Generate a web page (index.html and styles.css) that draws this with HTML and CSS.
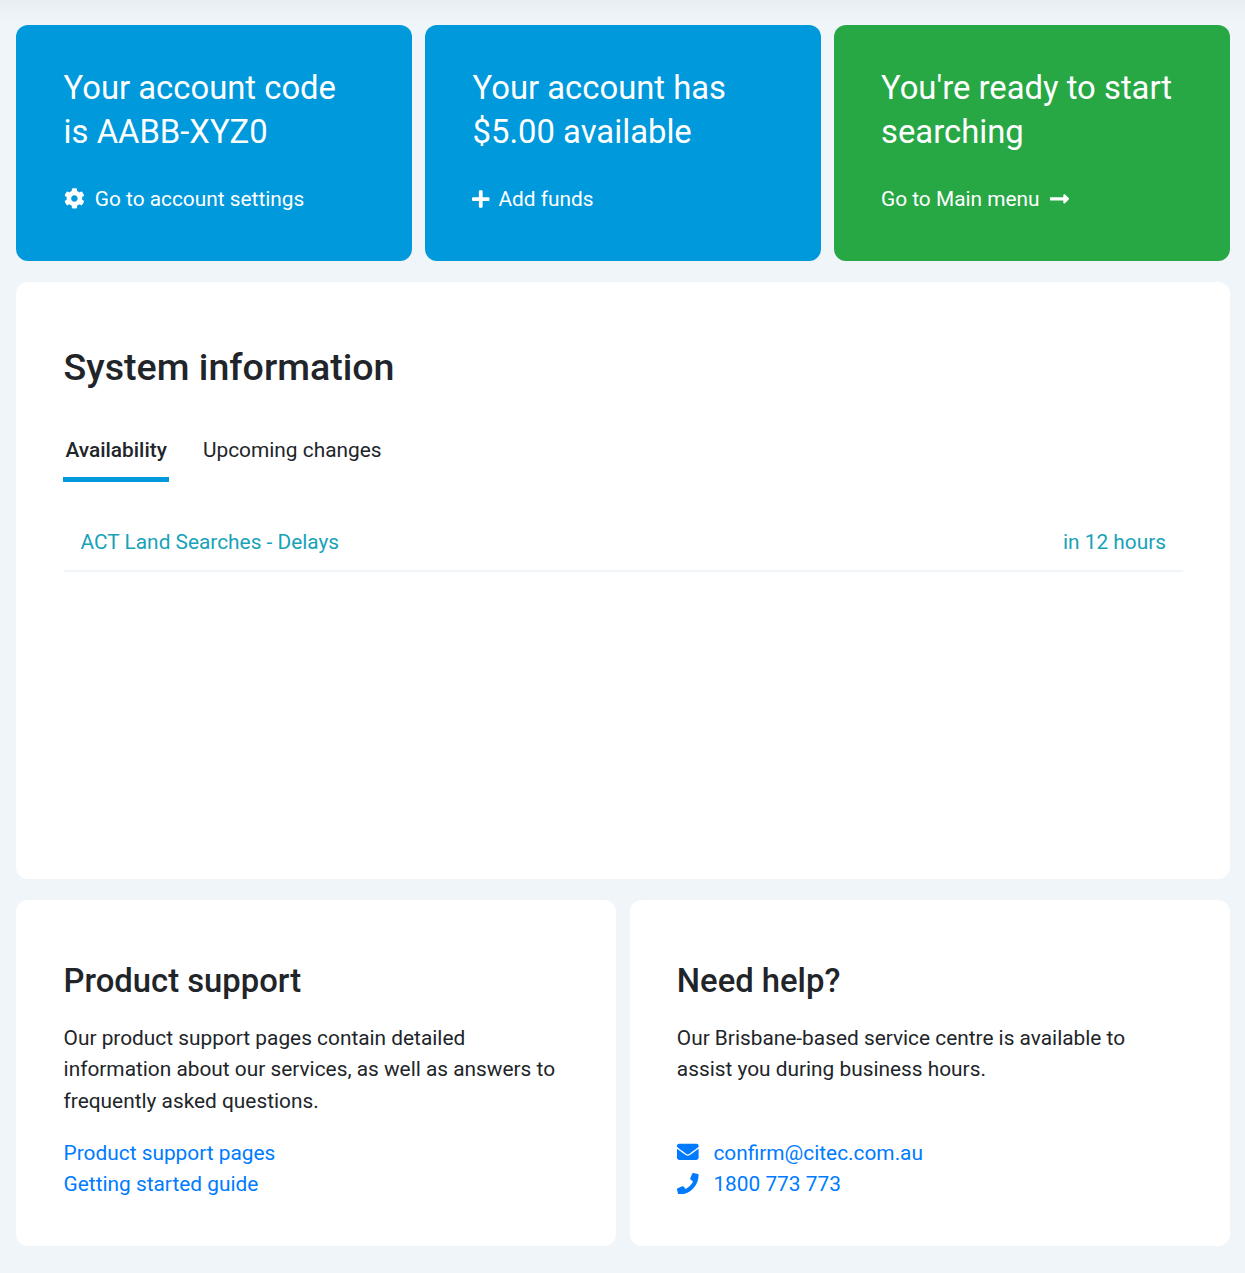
FILE: index.html
```html
<!DOCTYPE html>
<html lang="en">
  <head>
    <meta charset="UTF-8">
    <title>Dashboard</title>
    <link rel="stylesheet" href="styles.css">
  </head>
  <body>
    <div class="summary">
      <div class="tile tile-blue">
        <div class="tile-title">Your account code<br>is AABB-XYZ0</div>
        <a class="tile-link">
          <svg class="icon icon-gear" viewBox="0 0 512 512"><path d="M487.4 315.7l-42.6-24.6c4.3-23.2 4.3-47 0-70.2l42.6-24.6c4.9-2.8 7.1-8.6 5.5-14-11.1-35.6-30-67.8-54.7-94.6-3.8-4.1-10-5.1-14.8-2.3L380.8 110c-17.9-15.4-38.5-27.3-60.8-35.1V25.8c0-5.6-3.9-10.5-9.4-11.7-36.7-8.2-74.3-7.8-109.2 0-5.5 1.2-9.4 6.1-9.4 11.7V75c-22.2 7.9-42.8 19.8-60.8 35.1L88.7 85.5c-4.9-2.8-11-1.9-14.8 2.3-24.7 26.7-43.6 58.9-54.7 94.6-1.7 5.4.6 11.2 5.5 14L67.3 221c-4.3 23.2-4.3 47 0 70.2l-42.6 24.6c-4.9 2.8-7.1 8.6-5.5 14 11.1 35.6 30 67.8 54.7 94.6 3.8 4.1 10 5.1 14.8 2.3l42.6-24.6c17.9 15.4 38.5 27.3 60.8 35.1v49.2c0 5.6 3.9 10.5 9.4 11.7 36.7 8.2 74.3 7.8 109.2 0 5.5-1.2 9.4-6.1 9.4-11.7v-49.2c22.2-7.9 42.8-19.8 60.8-35.1l42.6 24.6c4.9 2.8 11 1.9 14.8-2.3 24.7-26.7 43.6-58.9 54.7-94.6 1.5-5.5-.7-11.3-5.6-14.1zM256 336c-44.1 0-80-35.9-80-80s35.9-80 80-80 80 35.9 80 80-35.9 80-80 80z"/></svg>
          <span>Go to account settings</span>
        </a>
      </div>
      <div class="tile tile-blue">
        <div class="tile-title">Your account has<br>$5.00 available</div>
        <a class="tile-link">
          <svg class="icon icon-plus" viewBox="0 0 448 512"><path d="M416 208H272V64c0-17.67-14.33-32-32-32h-32c-17.67 0-32 14.33-32 32v144H32c-17.67 0-32 14.33-32 32v32c0 17.67 14.33 32 32 32h144v144c0 17.67 14.33 32 32 32h32c17.67 0 32-14.33 32-32V304h144c17.67 0 32-14.33 32-32v-32c0-17.67-14.33-32-32-32z"/></svg>
          <span>Add funds</span>
        </a>
      </div>
      <div class="tile tile-green">
        <div class="tile-title">You're ready to start<br>searching</div>
        <a class="tile-link">
          <span>Go to Main menu</span>
          <svg class="icon icon-arrow" viewBox="0 0 448 512"><path d="M313.941 216H12c-6.627 0-12 5.373-12 12v56c0 6.627 5.373 12 12 12h301.941v46.059c0 21.382 25.851 32.09 40.971 16.971l86.059-86.059c9.373-9.373 9.373-24.569 0-33.941l-86.059-86.059c-15.119-15.119-40.971-4.411-40.971 16.971V216z"/></svg>
        </a>
      </div>
    </div>

    <div class="panel system">
      <h1>System information</h1>
      <div class="tabs">
        <a class="tab active">Availability</a>
        <a class="tab">Upcoming changes</a>
      </div>
      <div class="notice">
        <span>ACT Land Searches - Delays</span>
        <span>in 12 hours</span>
      </div>
    </div>

    <div class="columns">
      <div class="panel info">
        <h2>Product support</h2>
        <p>Our product support pages contain detailed information about our services, as well as answers to frequently asked questions.</p>
        <div class="links">
          <a>Product support pages</a>
          <a>Getting started guide</a>
        </div>
      </div>
      <div class="panel info info-help">
        <h2>Need help?</h2>
        <p>Our Brisbane-based service centre is available to assist you during business hours.</p>
        <div class="links">
          <a class="contact">
            <svg class="icon icon-contact" viewBox="0 0 512 512"><path d="M502.3 190.8c3.9-3.1 9.7-.2 9.7 4.7V400c0 26.5-21.5 48-48 48H48c-26.5 0-48-21.5-48-48V195.6c0-5 5.7-7.8 9.7-4.7 22.4 17.4 52.1 39.5 154.1 113.6 21.1 15.4 56.7 47.8 92.2 47.6 35.7.3 72-32.8 92.3-47.6 102-74.1 131.6-96.3 154-113.7zM256 320c23.2.4 56.6-29.2 73.4-41.4 132.7-96.3 142.8-104.7 173.4-128.7 5.8-4.5 9.2-11.5 9.2-18.9v-19c0-26.5-21.5-48-48-48H48C21.5 64 0 85.5 0 112v19c0 7.4 3.4 14.3 9.2 18.9 30.6 23.9 40.7 32.4 173.4 128.7 16.8 12.2 50.2 41.8 73.4 41.4z"/></svg>
            <span>confirm@citec.com.au</span>
          </a>
          <a class="contact">
            <svg class="icon icon-contact" viewBox="0 0 512 512"><path d="M493.4 24.6l-104-24c-11.3-2.6-22.9 3.3-27.5 13.9l-48 112c-4.2 9.8-1.4 21.3 6.9 28l60.6 49.6c-36 76.7-98.9 140.5-177.2 177.2l-49.6-60.6c-6.8-8.3-18.2-11.1-28-6.9l-112 48C3.9 366.5-2 378.1.6 389.4l24 104C27.1 504.2 36.7 512 48 512c256.1 0 464-207.5 464-464 0-11.2-7.7-20.9-18.6-23.4z"/></svg>
            <span>1800 773 773</span>
          </a>
        </div>
      </div>
    </div>
  </body>
</html>
```

FILE: styles.css
```css
* {
  margin: 0;
  padding: 0;
  box-sizing: border-box;
}

body {
  padding: 25px 15px 27px 16px;
  background: linear-gradient(#e9eef2, #f0f5f9 22px) no-repeat #f0f5f9;
  color: #212529;
  font-family: Roboto, "Liberation Sans", sans-serif;
  font-size: 20.85px;
  line-height: 31.3px;
}

.icon {
  display: block;
  fill: currentColor;
  flex-shrink: 0;
}

.summary {
  display: grid;
  grid-template-columns: repeat(3, 396px);
  gap: 13px;
}

.tile {
  height: 236px;
  padding: 41px 48px 0 47.6px;
  border-radius: 12px;
  color: #ffffff;
}

.tile-blue {
  background: #0099dc;
}

.tile-green {
  background: #28a745;
  padding-left: 47px;
}

.tile-title {
  font-size: 32.8px;
  line-height: 44px;
}

.tile-link {
  display: flex;
  align-items: center;
  margin-top: 24px;
  height: 44px;
}

.icon-gear {
  width: 20.8px;
  height: 20.8px;
  margin: -3px 10.4px 0 0;
}

.icon-plus {
  width: 17.5px;
  height: 20px;
  margin: -3px 9px 0 -0.6px;
}

.icon-arrow {
  width: 19px;
  height: 21.7px;
  margin: -3px 0 0 10.4px;
}

.panel {
  background: #ffffff;
  border-radius: 12px;
}

.system {
  height: 597px;
  margin-top: 21px;
  padding: 60px 47px 0 47.6px;
}

h1 {
  font-size: 37.6px;
  font-weight: 500;
  line-height: 50px;
}

.tabs {
  display: flex;
  gap: 31.4px;
  margin-top: 41px;
}

.tab {
  height: 49px;
  padding: 0 2.2px;
  line-height: 34px;
  border-bottom: 0 solid #0099dc;
}

.tab.active {
  font-weight: 500;
  border-bottom-width: 5px;
  margin-left: -0.6px;
  padding: 0 2.5px;
}

.notice {
  display: flex;
  justify-content: space-between;
  height: 74px;
  margin-top: 16px;
  padding: 29px 17px 0;
  border-bottom: 2px solid #f0f5f9;
  color: #17a2b8;
}

.columns {
  display: grid;
  grid-template-columns: 600px 600px;
  gap: 14px;
  margin-top: 21px;
}

.info {
  height: 346px;
  padding: 61px 48px 0 47.6px;
}

.info-help {
  padding-left: 46.8px;
}

h2 {
  font-size: 32.8px;
  font-weight: 500;
  line-height: 40px;
}

.info p {
  margin-top: 22px;
  height: 94px;
}

.links {
  display: flex;
  flex-direction: column;
  margin-top: 20.5px;
  color: #007bff;
}

.contact {
  display: flex;
  align-items: center;
}

.icon-contact {
  width: 21.6px;
  height: 21.6px;
  margin: -2px 14.8px 0 0.2px;
}
```
